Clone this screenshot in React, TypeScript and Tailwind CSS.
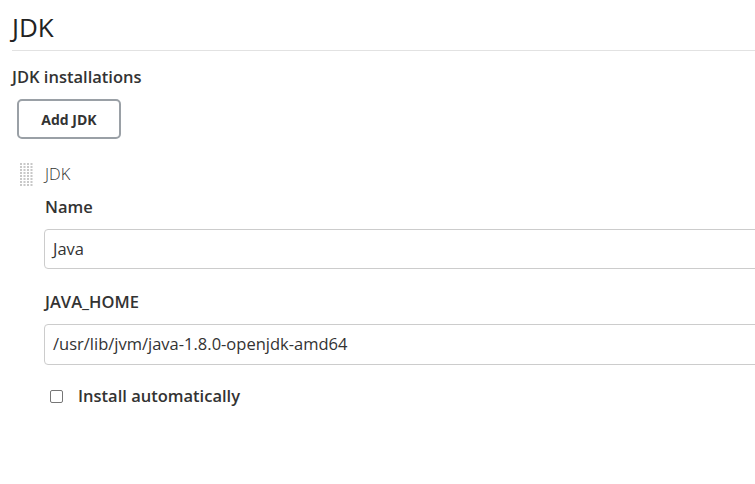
import React from 'react';

const font = { fontFamily: '"Open Sans", "Noto Sans", sans-serif' };

function DragHandle() {
  const dots = [];
  for (let r = 0; r < 8; r++) {
    for (let c = 0; c < 4; c++) {
      dots.push(<rect key={`${r}-${c}`} x={c * 3.5} y={r * 3} width="2" height="2" fill="#c8c8c8" />);
    }
  }
  return (
    <svg width="14" height="24" viewBox="0 0 14 24" className="shrink-0">
      {dots}
    </svg>
  );
}

export default function App() {
  return (
    <div className="w-[755px] h-[484px] overflow-hidden bg-white text-[#333]" style={font}>
      <div className="pl-3">
        <h1 className="text-[26px] leading-none pt-[14px] pb-[10px] border-b border-[#e2e2e2] font-normal text-[#222]">JDK</h1>
        <div className="pt-[14px]">
          <div className="text-[16.5px] font-semibold leading-6">JDK installations</div>
          <button className="block ml-[5px] mt-[10px] w-[104px] h-[40px] border-2 border-[#9aa0a6] rounded-[5px] text-[14px] font-bold text-[#333] bg-white">
            Add JDK
          </button>
        </div>
        <div className="mt-[23px] flex">
          <div className="pl-2 pt-[1px]">
            <DragHandle />
          </div>
          <div className="pl-[11px] flex-1">
            <div className="text-[16.5px] font-light leading-6">JDK</div>
            <div className="mt-[9px] text-[16.5px] font-semibold leading-6">Name</div>
            <div className="mt-[10px] w-[760px] h-[40px] border border-[#ccc] rounded-[4px] flex items-center px-[8px] -ml-[1px] text-[16.5px]">
              Java
            </div>
            <div className="mt-[21px] text-[16.5px] font-semibold leading-6">JAVA_HOME</div>
            <div className="mt-[10px] w-[760px] h-[41px] border border-[#ccc] rounded-[4px] flex items-center px-[8px] -ml-[1px] text-[16.5px]">
              /usr/lib/jvm/java-1.8.0-openjdk-amd64
            </div>
            <label className="mt-[19px] flex items-center ml-[5px]">
              <span className="w-[13px] h-[13px] border border-[#767676] rounded-[2px] bg-white" />
              <span className="ml-[15px] text-[16.5px] font-semibold leading-6">Install automatically</span>
            </label>
          </div>
        </div>
      </div>
    </div>
  );
}
